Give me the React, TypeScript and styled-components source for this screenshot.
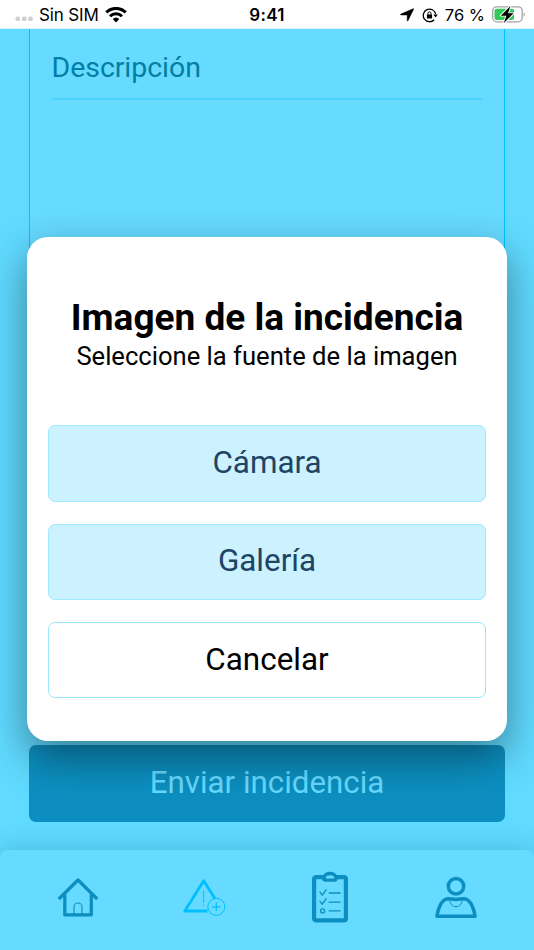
import React from "react";
import styled, { createGlobalStyle } from "styled-components";

const GlobalStyle = createGlobalStyle`
  * { box-sizing: border-box; }
  body { margin: 0; background: #60daff; font-family: Roboto, sans-serif; }
  button { font-family: inherit; margin: 0; padding: 0; }
`;

const Screen = styled.div`
  position: relative;
  width: 534px;
  height: 950px;
  display: flex;
  flex-direction: column;
  overflow: hidden;
  background: #60daff;
`;

const StatusBar = styled.header`
  height: 29px;
  flex: none;
  display: grid;
  grid-template-columns: 1fr auto 1fr;
  align-items: center;
  padding: 1px 9px 0 15px;
  background: #fff;
  border-bottom: 1px solid #d8f6ff;
  color: #000;
  font-family: Inter, sans-serif;
  font-size: 17px;
  line-height: 28px;
`;

const StatusGroup = styled.div<{ $end?: boolean }>`
  display: flex;
  align-items: center;
  justify-content: ${(p) => (p.$end ? "flex-end" : "flex-start")};
  svg { display: block; flex: none; }
`;

const Carrier = styled.span`
  margin: 0 6px 0 6px;
  font-size: 17px;
  letter-spacing: -0.15px;
`;

const Clock = styled.time`
  margin-right: 6px;
  font-size: 17px;
  font-weight: 600;
  letter-spacing: 0.3px;
`;

const Charge = styled.span`
  margin: 0 7px 0 7px;
  font-size: 16.5px;
  white-space: nowrap;
`;

const Content = styled.main`
  flex: 1;
  display: flex;
  flex-direction: column;
  padding: 0 29px 28px;
  min-height: 0;
`;

const FormCard = styled.section`
  flex: 1;
  margin-bottom: 24px;
  padding: 19px 22px 0;
  background: #66daff;
  border: solid #00bfff;
  border-width: 0 1px 1px;
  border-radius: 0 0 8px 8px;
`;

const FieldLabel = styled.div`
  height: 52px;
  border-bottom: 2px solid #4dd1ff;
  color: #027fa4;
  font-size: 28.5px;
  line-height: 40px;
  letter-spacing: -0.05px;
  text-indent: -0.5px;
`;

const SubmitButton = styled.button`
  height: 77px;
  flex: none;
  border: 0;
  border-radius: 7px;
  background: #0c8fc0;
  color: #66daff;
  font-size: 31.3px;
  line-height: 36px;
  padding-bottom: 1px;
`;

const TabBar = styled.nav`
  position: relative;
  z-index: 2;
  height: 100px;
  flex: none;
  display: grid;
  grid-template-columns: repeat(4, 1fr);
  padding: 0 15px 4px;
  background: #66daff;
  border-radius: 7px 7px 0 0;
  box-shadow: 0 0 26px rgba(0, 80, 110, 0.27);
`;

const Tab = styled.button<{ $active?: boolean }>`
  display: flex;
  align-items: center;
  justify-content: center;
  border: 0;
  background: none;
  color: ${(p) => (p.$active ? "#00bfff" : "#0c8fc0")};
  svg { display: block; fill: none; stroke: currentColor; }
`;

const Overlay = styled.div`
  position: absolute;
  inset: 29px 0 0;
  z-index: 1;
  display: flex;
  align-items: flex-start;
  justify-content: center;
  padding-top: 208px;
  overflow: hidden;
`;

const Dialog = styled.div`
  width: 480px;
  height: 504px;
  display: flex;
  flex-direction: column;
  padding: 59px 21px 43px;
  border-radius: 21px;
  background: #fff;
  box-shadow: 0 16px 42px rgba(0, 0, 0, 0.42);
  text-align: center;
`;

const DialogTitle = styled.h1`
  margin: 0;
  color: #000;
  font-size: 37px;
  font-weight: 700;
  line-height: 43px;
  white-space: nowrap;
`;

const DialogText = styled.p`
  margin: 2px 0 53.4px;
  color: #000;
  font-size: 25.6px;
  line-height: 31px;
  white-space: nowrap;
`;

const Choices = styled.div`
  display: flex;
  flex-direction: column;
  gap: 21.7px;
`;

const ChoiceButton = styled.button<{ $plain?: boolean }>`
  height: 76.5px;
  border: 1.5px solid ${(p) => (p.$plain ? "#99e6ff" : "#a0e9ff")};
  border-radius: 7px;
  background: ${(p) => (p.$plain ? "#fff" : "#ccf2ff")};
  color: ${(p) => (p.$plain ? "#000" : "#204463")};
  font-size: 31.4px;
  line-height: 36px;
  padding-bottom: 1px;
`;

const SignalDots = () => (
  <svg width="18" height="16" viewBox="0 0 18 16" fill="#d0d0d0">
    <rect x="0.5" y="9.5" width="4.5" height="4.5" rx="1.5" />
    <rect x="7" y="9.5" width="4.5" height="4.5" rx="1.5" />
    <rect x="13.3" y="9.5" width="4.5" height="4.5" rx="1.5" />
  </svg>
);

const WifiIcon = () => (
  <svg width="22" height="17" viewBox="0 0 22 17" fill="none" stroke="#000" strokeWidth="3">
    <path d="M1.3 5.4a13.8 13.8 0 0 1 19.4 0" />
    <path d="M5 9.2a8.6 8.6 0 0 1 12 0" />
    <path d="m7.7 12 3.3 3.4 3.3-3.4a4.8 4.8 0 0 0-6.6 0Z" fill="#000" stroke="none" />
  </svg>
);

const LocationIcon = () => (
  <svg width="14" height="14" viewBox="0 0 14 14" fill="#000" stroke="#000" strokeWidth="0.5">
    <path d="M13.2.7c.4-.2.6.1.4.5L8 12.7c-.2.5-.8.4-.8-.1V7L1 6.900c-.6 0-.7-.6-.1-.8Z" />
  </svg>
);

const RotationLockIcon = () => (
  <svg width="16" height="15" viewBox="0 0 16 15" fill="none" stroke="#000" strokeWidth="1.3">
    <path d="M13.700 6A6.300 6.300 0 1 0 12.200 11.700" />
    <path d="M11.300 6.600h4.500L13.600 9.600Z" fill="#000" stroke="none" />
    <rect x="4.900" y="6.500" width="5.200" height="4" rx=".5" fill="#000" stroke="none" />
    <path d="M6 7V5.400a1.500 1.500 0 0 1 3 0V7" strokeWidth="1" />
  </svg>
);

const BatteryIcon = () => (
  <svg width="33" height="20" viewBox="0 0 33 20">
    <rect x=".7" y="1.8" width="29.5" height="15" rx="4" fill="#fff" stroke="#a3a3a3" strokeWidth="1.3" />
    <path d="M31.700 7.200c1.500.8 1.500 3.500 0 4.300Z" fill="#a3a3a3" />
    <rect x="2.500" y="3.700" width="19.500" height="11.200" rx="2.200" fill="#34c759" />
    <path d="M18.500 1 8.800 10.700h5.600L11.700 18.300 21.500 8.300h-5.500Z" fill="#000" stroke="#fff" strokeWidth="1.8" paintOrder="stroke" strokeLinejoin="round" />
  </svg>
);

const HomeIcon = () => (
  <svg width="44" height="42" viewBox="0 0 44 42" strokeLinejoin="round">
    <path d="M2.800 22 22 3l19.200 19" strokeWidth="3.200" />
    <path d="M8.800 17.500v20.300h26.500V17.500" strokeWidth="3.300" />
    <path d="M18 37V30a4 4 0 0 1 8 0v7" strokeWidth="1.100" />
  </svg>
);

const IncidentIcon = () => (
  <svg width="44" height="42" viewBox="0 0 44 42" strokeLinejoin="round">
    <path d="M25.500 34H2.800L21.700 3.700 33.200 22" strokeWidth="2.800" />
    <path d="M21.700 13.500v12.300M21.700 27.500v1.600" strokeWidth="1" />
    <circle cx="34.300" cy="29.800" r="8.500" strokeWidth="1" />
    <path d="M30 29.800h8.600M34.300 25.500v8.600" strokeWidth="1.200" />
  </svg>
);

const ChecklistIcon = () => (
  <svg width="38" height="54" viewBox="0 0 38 54" strokeLinejoin="round" strokeLinecap="round">
    <rect x="3.100" y="6.200" width="31.800" height="43.200" rx="2" strokeWidth="4.200" />
    <path d="M11.800 6.100h1.500c.9-2.800 2-3.600 5.700-3.600s4.800.8 5.700 3.600h1.500l-2.500 3H14.300Z" strokeWidth="3.400" fill="#66daff" />
    <path d="M12.200 9.300h13.600" strokeWidth="1.200" />
    <path d="m9 21.300 2.300 2.800 3.800-5.300M9 30.400l2.300 2.800 3.800-5.400" strokeWidth="1.400" />
    <circle cx="11.600" cy="39.900" r="2" strokeWidth="1.400" />
    <path d="M18.200 22h11M18.200 31.200h11M18.200 39.900h11" strokeWidth="1.300" />
  </svg>
);

const ProfileIcon = () => (
  <svg width="44" height="44" viewBox="0 0 44 44" strokeLinejoin="round">
    <circle cx="22" cy="10.200" r="7.700" strokeWidth="3.500" />
    <path d="M2.900 40.200C4.500 31.500 8 22.700 14.500 22.700c2.500 0 4 .8 7.500.8s5-.8 7.500-.8C36 22.700 39.500 31.500 41.100 40.200Z" strokeWidth="3.500" />
    <path d="M15.500 24c1 4.200 3 6.700 6.500 6.700s5.500-2.500 6.500-6.700" strokeWidth="1" />
  </svg>
);

const RightIcons = styled.span`
  display: flex;
  align-items: center;
  gap: 8px;
`;

export default function App() {
  return (
    <Screen>
      <GlobalStyle />
      <StatusBar>
        <StatusGroup>
          <SignalDots />
          <Carrier>Sin SIM</Carrier>
          <WifiIcon />
        </StatusGroup>
        <Clock>9:41</Clock>
        <StatusGroup $end>
          <RightIcons>
            <LocationIcon />
            <RotationLockIcon />
          </RightIcons>
          <Charge>76 %</Charge>
          <BatteryIcon />
        </StatusGroup>
      </StatusBar>
      <Content>
        <FormCard>
          <FieldLabel>Descripción</FieldLabel>
        </FormCard>
        <SubmitButton>Enviar incidencia</SubmitButton>
      </Content>
      <TabBar>
        <Tab aria-label="Inicio"><HomeIcon /></Tab>
        <Tab $active aria-label="Nueva incidencia"><IncidentIcon /></Tab>
        <Tab aria-label="Tareas"><ChecklistIcon /></Tab>
        <Tab aria-label="Perfil"><ProfileIcon /></Tab>
      </TabBar>
      <Overlay>
        <Dialog role="dialog" aria-labelledby="dialog-title">
          <DialogTitle id="dialog-title">Imagen de la incidencia</DialogTitle>
          <DialogText>Seleccione la fuente de la imagen</DialogText>
          <Choices>
            <ChoiceButton>Cámara</ChoiceButton>
            <ChoiceButton>Galería</ChoiceButton>
            <ChoiceButton $plain>Cancelar</ChoiceButton>
          </Choices>
        </Dialog>
      </Overlay>
    </Screen>
  );
}
